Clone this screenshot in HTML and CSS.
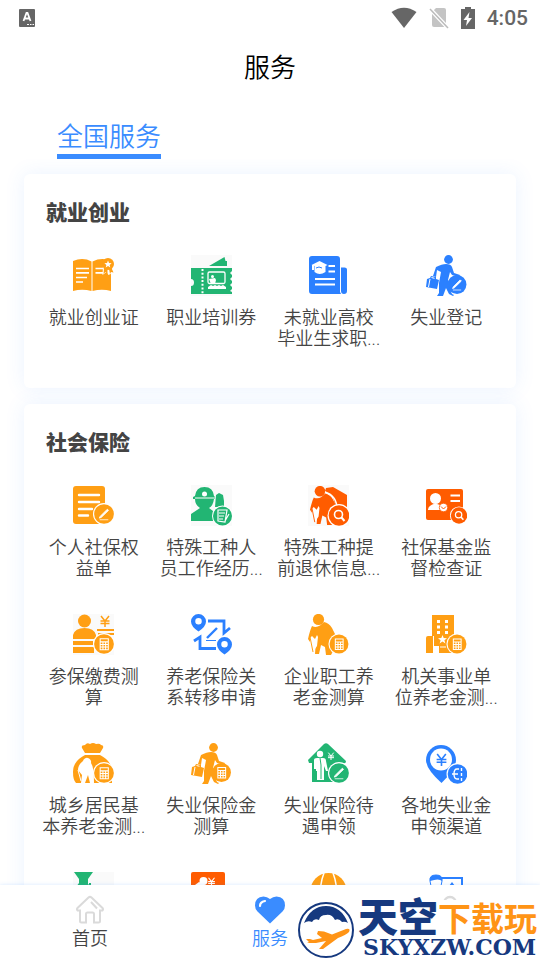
FILE: index.html
```html
<!DOCTYPE html>
<html lang="zh-CN">
  <head>
    <meta charset="UTF-8" />
    <meta name="viewport" content="width=device-width, initial-scale=1.0" />
    <title>服务</title>
    <link rel="stylesheet" href="styles.css" />
  </head>
  <body>
    <svg class="sprite" aria-hidden="true">
      <symbol id="pen-badge" viewBox="0 0 24 24">
        <circle cx="12" cy="12" r="11.5" fill="#fff" />
        <circle cx="12" cy="12" r="10.300" fill="currentColor" />
        <path d="M8 14.5 15.5 7l1.2 1.2L9.200 15.500l-2 .8z" fill="#fff" stroke="#fff" stroke-width="1" />
        <path d="M7.500 18h9" stroke="#fff" stroke-width=".8" />
      </symbol>
      <symbol id="calc-badge" viewBox="0 0 24 24">
        <circle cx="12" cy="12" r="11.5" fill="#fff" />
        <circle cx="12" cy="12" r="10.300" fill="currentColor" />
        <path d="M8 6.500h8.500v11.500H8zM8 9.800h8.500M8 12.500h8.500M8 15.200h8.500M10.900 9.800v8M13.700 9.800v8" fill="none" stroke="#fff" stroke-width="1.100" />
      </symbol>
      <symbol id="search-badge" viewBox="0 0 24 24">
        <circle cx="12" cy="12" r="11.5" fill="#fff" />
        <circle cx="12" cy="12" r="10.300" fill="currentColor" />
        <circle cx="11.5" cy="11" r="4" fill="none" stroke="#fff" stroke-width="1.600" />
        <path d="m14.500 14 3 3.500" stroke="#fff" stroke-width="2" />
      </symbol>
      <symbol id="walker" viewBox="0 0 41 41">
        <g fill="currentColor">
          <circle cx="22.500" cy="4.500" r="4.400" />
          <path d="M10 12q6-3 10-3 5 0 6 3l2 6 6 2-1 2-7-2-2-3-2 8 2 4-4 4-3 8h-6l2-3V28l2-11-4-2-1 7-3-1z" />
          <path d="m20 25 6 14 2 1-1 1-4-2-6-12z" />
          <path d="m1 24 3-1 1-2 5 1v2l3 1-2 9-11-2z" />
        </g>
        <path d="m5.500 22.500 3 .8M4 24l-1.500 8" stroke="#fff" fill="none" />
      </symbol>
      <symbol id="elder" viewBox="0 0 41 41">
        <g fill="currentColor">
          <circle cx="10.500" cy="5.500" r="5.600" />
          <path d="M4 12q4 2 8-.5l4-3.500q5 1 8 6l5 10v5l-6 12h-5l-1-8-4-2-2 9H7l1-14-4 5-4-6q2-9 4-13z" />
        </g>
        <path d="m2 24 2-2 3 3 2-4 1 2-1 9-4 6-3-6z" fill="#fff" />
        <path d="m2 23 3 15" stroke="currentColor" />
      </symbol>
      <symbol id="yen" viewBox="0 0 12 12">
        <path d="m2 1 4 5 4-5M1.500 6h9M1.500 8.500h9M6 6v6" fill="none" stroke="currentColor" stroke-width="1.500" />
      </symbol>
    </svg>

    <div class="app">
      <div class="status-bar">
        <svg class="keyboard-icon" viewBox="0 0 16 18">
          <rect width="16" height="18" rx="1" fill="#666" />
          <path d="m4.500 12 3-8h1l3 8M5.500 9.500h5" fill="none" stroke="#fff" stroke-width="1.800" />
          <path d="M8 15.500h2m1 0h1.500m1 0H15" stroke="#fff" />
        </svg>
        <div class="status-icons">
          <svg width="26" height="22" viewBox="0 0 26 22">
            <path d="M.5 5Q13-3.500 25.500 5L13 21z" fill="#666" />
          </svg>
          <svg width="20" height="22" viewBox="0 0 20 22">
            <path d="M7 1h8q2 0 2 2v15q0 2-2 2H5q-2 0-2-2V5z" fill="#c4c4c4" />
            <path d="m1 2 18 19" stroke="#fff" stroke-width="4" />
            <path d="m1 2 18 19" stroke="#bbb" stroke-width="1.500" />
          </svg>
          <svg width="14" height="22" viewBox="0 0 14 22">
            <path d="M4 0h6v2h4v20H0V2h4z" fill="#666" />
            <path d="m8.500 5-6 8h3.500l-1 6 6-8H7.500z" fill="#fff" />
          </svg>
          <span class="clock">4:05</span>
        </div>
      </div>

      <header class="header">
        <h1>服务</h1>
      </header>

      <div class="tabs">
        <a class="tab" href="#national">全国服务</a>
      </div>

      <main class="content" id="national">
        <section class="card">
          <h2>就业创业</h2>
          <div class="grid">
            <a class="service orange" href="#">
              <svg viewBox="0 0 41 41">
                <path d="M0 6q10-4 18.500.5V36Q9 33.500 0 36zM19.500 6.500Q29 2 38 6v30q-9-2.500-18.500 0z" fill="currentColor" />
                <path d="M3 13.500h13M3 17.800h13M3 22.500h11M3 27h7M22.500 13.500H31M22.500 17.800h8" stroke="#fff" stroke-width="1.700" />
                <path d="m30 11-.500 9 4-3 2 3 4-2-1-6" fill="#fff" />
                <path d="m31 13-.500 6 2-2 2 2V14zM36 14l1 5 1-2 2.500.500L38 12z" fill="currentColor" />
                <circle cx="35" cy="9" r="6" fill="currentColor" />
                <path d="m35 5.500 1 2.500 2.600.2-2 1.700.7 2.600-2.300-1.500-2.300 1.500.7-2.600-2-1.700L34 8z" fill="#fff" />
              </svg>
              <span>就业创业证</span>
            </a>
            <a class="service green" href="#">
              <svg class="tinted" viewBox="0 0 41 41">
                <path d="M18 11 33.500 2l1 4H36v5z" fill="currentColor" />
                <path d="M0 13h41v3l-2 2 2 2v2l-2 2 2 2v2l-2 2 2 2v2l-2 2 2 1v2H0v-8q3 0 3-3.500T0 24z" fill="currentColor" />
                <path d="M11.500 14v25" stroke="#fff" stroke-width="2" stroke-dasharray="2 1.700" />
                <rect x="17" y="17" width="17" height="11.500" rx="1.500" fill="none" stroke="#fff" stroke-width="1.300" />
                <circle cx="21.500" cy="21.500" r="1.500" fill="#fff" />
                <path d="m18 24 6-1 1 2-1 4h-4zM17 34v-2l3-2 2 1 2-1 2 1 2-1 2 1 2-1 3 2v2z" fill="#fff" />
              </svg>
              <span>职业培训券</span>
            </a>
            <a class="service blue" href="#">
              <svg viewBox="0 0 41 41">
                <path d="M4 1h25q3 0 3 3v33l1 2H4q-3 0-3-3V4q0-3 3-3zM33 12.500h3.500q2.500 0 2.500 2V36q0 3-3 3t-3-3z" fill="currentColor" />
                <path d="m3.500 10 8-4 8 4-2 1v6q-6 4-11 0v-6z" fill="#fff" />
                <path d="M8 13q3-2 6 0" stroke="currentColor" fill="none" />
                <path d="M5 10v5M20.500 11h6.500M20.500 16.500h6.500M7 24h20M7 29.500h20" stroke="#fff" stroke-width="2" />
              </svg>
              <span>未就业高校毕业生求职...</span>
            </a>
            <a class="service blue" href="#">
              <svg viewBox="0 0 41 41">
                <use href="#pen-badge" x="20" y="18.500" width="22" height="22" />
                <use href="#walker" />
              </svg>
              <span>失业登记</span>
            </a>
          </div>
        </section>

        <section class="card">
          <h2>社会保险</h2>
          <div class="grid">
            <a class="service orange" href="#">
              <svg viewBox="0 0 41 41">
                <rect y="1" width="32" height="38" rx="3" fill="currentColor" />
                <path d="M6 10h20M6 17h20M6 24h13M6 30.500h9" stroke="#fff" stroke-width="2.400" stroke-linecap="round" />
                <use href="#pen-badge" x="19.500" y="17.500" width="23" height="23" />
              </svg>
              <span>个人社保权益单</span>
            </a>
            <a class="service green" href="#">
              <svg class="tinted" viewBox="0 0 41 41">
                <path d="M2 12 4 11Q5 2 13.500 2T23 11l1 1v2h-1q-1 7-5 9l4 3v10H0v-7l9-6q-5-3-5-9H2zM25 10l3-2 4 2 1 6v6H24z" fill="currentColor" />
                <path d="M4 13h20" stroke="#fff" stroke-width="1" />
                <circle cx="13.500" cy="9" r="2.500" fill="#fff" />
                <circle cx="31.500" cy="31" r="10.500" fill="#fff" />
                <circle cx="31.500" cy="31" r="9.500" fill="currentColor" />
                <path d="M27 25h9l-2 12-7-1zM28 28h6M28 31h5M28 34h4M34 36l4-7" fill="none" stroke="#fff" stroke-width="1.200" />
              </svg>
              <span>特殊工种人员工作经历...</span>
            </a>
            <a class="service red" href="#">
              <svg class="tinted" viewBox="0 0 41 41">
                <path d="m18 3 7-1 14 8v15l-10 2-4-15-8-6z" fill="currentColor" />
                <use href="#elder" x="2" y="1" width="39" height="39" />
                <path d="M17 7q13 4 12 20" fill="none" stroke="#fff" stroke-width="1.500" />
                <use href="#search-badge" x="19" y="18.500" width="24" height="24" />
              </svg>
              <span>特殊工种提前退休信息...</span>
            </a>
            <a class="service red" href="#">
              <svg viewBox="0 0 41 41">
                <rect y="4" width="37" height="31" rx="2" fill="currentColor" />
                <circle cx="9.500" cy="13.500" r="5.500" fill="#fff" />
                <path d="M2 25q0-5 7.500-6.500L14 20v5z" fill="#fff" />
                <circle cx="17.500" cy="22.500" r="4.200" fill="#fff" stroke="currentColor" stroke-width=".8" />
                <path d="m15 21.500 2.500 2.500 2.500-2.500" stroke="currentColor" fill="none" />
                <path d="M24.500 10.500H34M24.500 16H34" stroke="#fff" stroke-width="1.800" />
                <use href="#search-badge" x="23.500" y="21" width="19" height="19" />
              </svg>
              <span>社保基金监督检查证</span>
            </a>

            <a class="service orange" href="#">
              <svg class="tinted" viewBox="0 0 41 41">
                <g fill="currentColor">
                  <circle cx="11.500" cy="7" r="6.500" />
                  <path d="M0 25v-4q2-7 11.500-7T23 21v4zM0 27h20v4H0zM0 33h21v6H0zM24 15h17v2H24zM25 19h16v2H25z" />
                </g>
                <use href="#yen" x="26" y="1" width="12" height="12" />
                <use href="#calc-badge" x="19.500" y="18.500" width="23" height="23" />
              </svg>
              <span>参保缴费测算</span>
            </a>
            <a class="service blue" href="#">
              <svg viewBox="0 0 41 41">
                <path d="M7.500 0a7.500 7.500 0 0 1 7.500 7.500q0 5-7.500 10Q0 12.500 0 7.500A7.500 7.500 0 0 1 7.500 0zm0 4a3.200 3.200 0 1 0 0 6.500 3.200 3.200 0 0 0 0-6.500zM33.500 23a7.500 7.500 0 0 1 7.500 7.500q0 5-7.500 10-7.500-5-7.500-10a7.500 7.500 0 0 1 7.500-7.500zm0 4a3.200 3.200 0 1 0 0 6.500 3.200 3.200 0 0 0 0-6.500z" fill="currentColor" />
                <path d="M17 7h16v12l6-5M25 34.500H9V23l-6 4" fill="none" stroke="currentColor" stroke-width="2.800" />
                <path d="m16 24 10-10" stroke="currentColor" stroke-width="2.400" />
                <path d="M15 26.500h10" stroke="currentColor" />
              </svg>
              <span>养老保险关系转移申请</span>
            </a>
            <a class="service orange" href="#">
              <svg viewBox="0 0 41 41">
                <use href="#elder" />
                <use href="#calc-badge" x="20" y="19" width="22" height="22" />
              </svg>
              <span>企业职工养老金测算</span>
            </a>
            <a class="service orange" href="#">
              <svg viewBox="0 0 41 41">
                <path d="M6 1h22v38H13v-7h-5v7H0V24q0-2 2-2h4z" fill="currentColor" />
                <path d="M11 6h3v3h-3zM19 6h3v3h-3zM11 11.500h3v3h-3zM19 11.500h3v3h-3zM11 17h3v3h-3zM19 17h3v3h-3zM16.500 21l1.200 3 3.300.2-2.600 2 1 3.300-2.900-2-2.900 2 1-3.300-2.600-2 3.300-.2z" fill="#fff" />
                <path d="M7.500 22v17M14 33h6" stroke="#fff" />
                <use href="#calc-badge" x="20" y="19" width="22" height="22" />
              </svg>
              <span>机关事业单位养老金测...</span>
            </a>

            <a class="service orange" href="#">
              <svg viewBox="0 0 41 41">
                <path d="M9 5q-1-3 3-3 2-3 5-1 3-2 6 0 4-1 5 1 3 0 2 3l-3 5H12z" fill="currentColor" />
                <path d="M12 12h15q12 6 12 17v11H3q-3-3-3-11 0-11 12-17z" fill="currentColor" />
                <path d="M10 18a4 4 0 1 1 8 2q3 4 3 20h-4l-2-8-3 8H8l1-8-4-5q0-5 5-9z" fill="#fff" />
                <path d="m5 27 3 11" stroke="#fff" />
                <use href="#calc-badge" x="19.500" y="18.500" width="23" height="23" />
              </svg>
              <span>城乡居民基本养老金测...</span>
            </a>
            <a class="service orange" href="#">
              <svg viewBox="0 0 41 41">
                <use href="#calc-badge" x="19.500" y="18.500" width="22" height="22" />
                <use href="#walker" />
              </svg>
              <span>失业保险金测算</span>
            </a>
            <a class="service green" href="#">
              <svg viewBox="0 0 41 41">
                <path d="M16 1q2-1.500 4 0l18 17q0 3-3 2v19H4V20H1l-1-3z" fill="currentColor" />
                <circle cx="12" cy="11" r="3.200" fill="#fff" />
                <path d="M6 17q0-2 3-2h6q3 0 3 3l2 10h-2l-2-5v14h-7V28H8v-2H6zM9 27h2v10H9z" fill="#fff" />
                <path d="m12 15 1 7v14" stroke="currentColor" fill="none" />
                <g class="white"><use href="#yen" x="19" y="9" width="8" height="8" /></g>
                <use href="#pen-badge" x="19.500" y="18.500" width="23" height="23" />
              </svg>
              <span>失业保险待遇申领</span>
            </a>
            <a class="service blue" href="#">
              <svg viewBox="0 0 41 41">
                <path d="M15 2a15 15 0 0 1 15 15q0 9-14.500 23Q0 26 0 17A15 15 0 0 1 15 2z" fill="currentColor" />
                <circle cx="15" cy="16.500" r="11" fill="#fff" />
                <use href="#yen" x="9" y="10" width="13" height="13" />
                <circle cx="31.500" cy="31" r="11" fill="#fff" />
                <circle cx="31.500" cy="31" r="9.800" fill="currentColor" />
                <path d="M33 26h-2q-3 0-3 5t3 5h2M26 31h6M35.500 25v3m0 2v3m0 2v3" fill="none" stroke="#fff" stroke-width="1.400" />
              </svg>
              <span>各地失业金申领渠道</span>
            </a>

            <a class="service green" href="#" aria-label="服务">
              <svg class="tinted" viewBox="0 0 41 41">
                <path d="M1 0h19l-5 7v5l4 3v15H3V15l3-4V7zM16 11h2v2h-2z" fill="currentColor" />
              </svg>
            </a>
            <a class="service red" href="#" aria-label="服务">
              <svg viewBox="0 0 41 41">
                <rect width="34" height="34" rx="2" fill="currentColor" />
                <circle cx="12.500" cy="9" r="4" fill="#fff" />
                <path d="m4 13 4-3 7 3v8H4z" fill="#fff" />
                <g class="white"><use href="#yen" x="16" y="5" width="9" height="9" /></g>
              </svg>
            </a>
            <a class="service orange" href="#" aria-label="服务">
              <svg viewBox="0 0 41 41">
                <circle cx="20.500" cy="19" r="18" fill="currentColor" />
                <path d="M16 1q-7 18 0 36M25 1q7 18 0 36" fill="none" stroke="#fff" stroke-width="1.500" />
              </svg>
            </a>
            <a class="service blue" href="#" aria-label="服务">
              <svg viewBox="0 0 41 41">
                <path d="M14 6h22v26H14" fill="none" stroke="currentColor" stroke-width="2" />
                <path d="M4 9q-1-6 6-6t6 6l-1 5q-5 5-10 0z" fill="none" stroke="currentColor" />
                <path d="M4 9q-1-6 6-6t6 6q-3-3-12 0zM26 10l3 4h-6z" fill="currentColor" />
              </svg>
            </a>
          </div>
        </section>
      </main>

      <nav class="bottom-nav">
        <a class="nav-item" href="#">
          <svg viewBox="0 0 30 30">
            <path d="M13.500 2.500q1.500-1.300 3 0L27.500 13q1 1.200 0 2.500H25V26q0 1.500-1.500 1.500h-4.500V19q0-1.500-1.500-1.500h-5Q11 17.500 11 19v8.500H6.500Q5 27.500 5 26V15.500H2.500q-1-1.300 0-2.500zM16 7l6 6.500" fill="none" stroke="#dadada" stroke-width="2" />
          </svg>
          <span>首页</span>
        </a>
        <a class="nav-item active" href="#">
          <svg viewBox="0 0 30 30">
            <path d="M15 28.500 2.500 16.500Q0 14 0 10.500 0 2 8.500 1.500 12 1.500 15 4q3-2.500 6.500-2.500Q30 2 30 10.500q0 3.500-2.500 6z" fill="currentColor" />
            <path d="M5 11q0-4 5-5" fill="none" stroke="#fff" stroke-width="2.200" stroke-linecap="round" />
          </svg>
          <span>服务</span>
        </a>
        <a class="nav-item" href="#" aria-label="我的">
          <svg viewBox="0 0 30 30">
            <circle cx="15" cy="8" r="6" fill="none" stroke="#dadada" stroke-width="2.400" />
          </svg>
        </a>
      </nav>

      <div class="watermark">
        <svg viewBox="0 0 56 56">
          <circle cx="28" cy="28" r="27" fill="#fff" stroke="#16397f" stroke-width="2" />
          <path d="M6 21Q13 4 28 4t22 17q-3-2-6-1-3-4-7-2-3-6-9-5-6 0-7 5-5-2-7 2-4-2-8 1z" fill="#16397f" />
          <path d="m20 29 6 .500 8 3L48 27q5-1 3 3-3 3-11 6L25 47h-4l7-8-10 2H9l2-1-3-3h4l3 1 9-2-5-4z" fill="#ff9416" />
        </svg>
        <div class="watermark-text">
          <p class="watermark-name">天空<span>下载玩</span></p>
          <p class="watermark-site">SKYXZW.COM</p>
        </div>
      </div>
    </div>
  </body>
</html>
```
FILE: styles.css
```css
* {
  box-sizing: border-box;
}
body {
  margin: 0;
  background: #fff;
  color: #444;
  font-family: Roboto, "Noto Sans CJK SC", sans-serif;
}
h1,
h2,
p {
  margin: 0;
}
a {
  color: inherit;
  text-decoration: none;
}
.sprite {
  display: none;
}
.app {
  position: relative;
  display: flex;
  flex-direction: column;
  height: 100vh;
  overflow: hidden;
}

/* status bar */
.status-bar {
  display: flex;
  justify-content: space-between;
  align-items: center;
  height: 36px;
  padding: 0 12px 0 19px;
}
.keyboard-icon {
  width: 16px;
  height: 18px;
}
.status-icons {
  display: flex;
  align-items: center;
  gap: 12px;
}
.clock {
  color: #666;
  font-size: 21px;
  font-weight: 500;
  line-height: 24px;
}

/* header and tabs */
.header {
  padding: 14px 0 12px;
  text-align: center;
}
.header h1 {
  color: #000;
  font-size: 26px;
  font-weight: 350;
  line-height: 36px;
}
.tabs {
  display: flex;
  padding: 22px 57px 0;
}
.tab {
  border-bottom: 5px solid #3a8cff;
  color: #3a8cff;
  font-size: 26px;
  font-weight: 350;
  line-height: 34px;
}

/* service cards */
.content {
  display: flex;
  flex: 1;
  flex-direction: column;
  gap: 16px;
  min-height: 0;
  padding: 15px 24px 0;
  overflow-y: auto;
  scrollbar-width: none;
}
.card {
  flex: none;
  padding: 24px 11px 39px;
  border-radius: 6px;
  background: #fff;
  box-shadow: 0 0 20px rgba(58, 140, 255, 0.1);
}
.card h2 {
  padding-left: 11px;
  font-size: 21px;
  font-weight: 900;
  line-height: 30px;
}
.grid {
  display: grid;
  grid-template-columns: repeat(4, 1fr);
  row-gap: 35px;
  margin-top: 27px;
}
.service {
  display: flex;
  flex-direction: column;
  align-items: center;
  gap: 11px;
}
.service svg {
  width: 41px;
  height: 41px;
}
.service span {
  min-height: 42px;
  padding: 0 6px;
  color: #444;
  font-size: 18px;
  font-weight: 350;
  line-height: 21px;
  text-align: center;
}
.tinted {
  background: #fafafa;
}
.orange {
  color: #ff9f14;
}
.green {
  color: #22b573;
}
.blue {
  color: #2b80ff;
}
.red {
  color: #ff5c00;
}
.white {
  color: #fff;
}

/* bottom navigation */
.bottom-nav {
  position: relative;
  display: flex;
  height: 75px;
  background: #fff;
  box-shadow: 0 0 4px rgba(58, 140, 255, 0.2);
}
.nav-item {
  display: flex;
  flex: 1;
  flex-direction: column;
  align-items: center;
  gap: 2px;
  padding-top: 10px;
  font-size: 18px;
  font-weight: 350;
  line-height: 24px;
}
.nav-item svg {
  width: 30px;
  height: 30px;
}
.nav-item.active {
  color: #3a8cff;
}

/* site mark over the navigation */
.watermark {
  position: absolute;
  right: 0;
  bottom: 0;
  display: flex;
  align-items: center;
  gap: 4px;
  padding: 0 3px 0 2px;
  height: 60px;
  background: #fff;
}
.watermark svg {
  width: 56px;
  height: 56px;
}
.watermark-text {
  color: #16397f;
  line-height: 1;
  white-space: nowrap;
}
.watermark-name {
  display: flex;
  align-items: center;
  height: 34px;
  font-size: 40px;
  font-weight: 900;
}
.watermark-name span {
  color: #ff9416;
  font-size: 33px;
  font-weight: 700;
}
.watermark-site {
  padding-left: 5px;
  font-family: "DejaVu Serif", serif;
  font-size: 22px;
  font-weight: 700;
  line-height: 22px;
}
```
